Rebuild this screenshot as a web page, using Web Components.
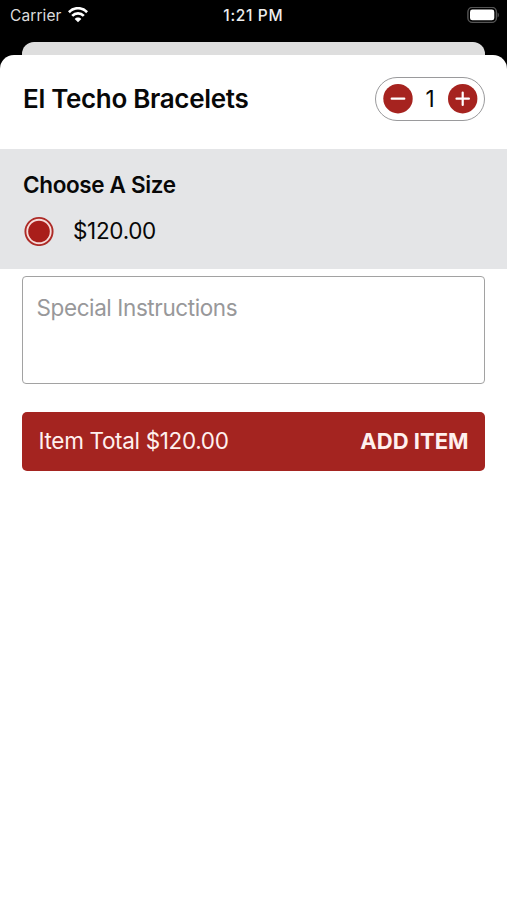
<!DOCTYPE html>
<html lang="en"><head><meta charset="utf-8"><title>El Techo Bracelets</title>
<style>html,body{margin:0;background:#000}body{font-family:Inter,"Liberation Sans",sans-serif;color:#080808}</style></head>
<body><item-screen></item-screen>
<script>
const define = (name, html) => customElements.define(name, class extends HTMLElement {
  constructor() { super(); this.attachShadow({mode: "open"}).innerHTML = html; }
});
define("status-bar", `<style>
:host{display:grid;grid-template-columns:1fr auto 1fr;align-items:center;height:30px;padding:0 8px 0 10px;box-sizing:border-box;color:#dcdcdc;font-size:15.5px;line-height:20px}
.l{display:flex;align-items:center;gap:6px}.l span{letter-spacing:.1px;padding-top:1px}.t{font-weight:500;letter-spacing:.65px;margin:0 .5px 0 -2px;padding-top:1px;color:#eee}.r{justify-self:end;display:flex}svg{display:block}
</style><div class="l"><span>Carrier</span><svg width="20" height="16" viewBox="0 0 20 16" fill="none" stroke="#fff" stroke-width="2.7"><path d="M.9 5.2C6-.1 14-.1 19.1 5.2M4.2 8.9c3.2-3.3 8.4-3.3 11.6 0"/><path d="M10 15.2 6.7 11.9c1.8-1.8 4.8-1.8 6.6 0z" fill="#fff" stroke="none"/></svg></div>
<span class="t">1:21 PM</span>
<div class="r"><svg width="32" height="17" viewBox="0 0 32 17"><rect x=".9" y=".4" width="28.5" height="15" rx="4.5" fill="none" stroke="#555" stroke-width="1.4"/><rect x="3" y="2.5" width="24.3" height="10.8" rx="2.4" fill="#fff"/><path d="M30.6 5.5v5q1.3-.8 1.3-2.5t-1.3-2.5" fill="#555"/></svg></div>`);
define("quantity-stepper", `<style>
:host{display:flex;box-sizing:border-box;width:110px;height:44px;border:1.5px solid #9a9a9c;border-radius:22px;padding:0 6.5px;align-items:center;justify-content:space-between;font-size:22.5px;line-height:28px}
svg{display:block}
</style><svg width="30" height="30"><circle cx="15" cy="14.7" r="14.7" fill="#a6231f"/><path d="M8.7 14.7h12.6" stroke="#fff" stroke-width="2.2" stroke-linecap="round"/></svg>
<slot></slot><svg width="30" height="30"><circle cx="14.7" cy="14.7" r="14.7" fill="#a6231f"/><path d="M8.5 14.7h12.4M14.7 8.5v12.4" stroke="#fff" stroke-width="2.2" stroke-linecap="round"/></svg>`);
define("item-header", `<style>
:host{display:flex;height:94px;box-sizing:border-box;padding:22px 22px 0 23px;justify-content:space-between}
h1{margin:0;font-size:26px;line-height:44px;font-weight:600;letter-spacing:-.32px}
</style><h1><slot></slot></h1><quantity-stepper>1</quantity-stepper>`);
define("size-options", `<style>
:host{display:block;height:120px;box-sizing:border-box;background:#e4e5e7;padding:21px 23px 0}
h2{margin:0;font-size:22.5px;line-height:30px;font-weight:600;letter-spacing:-.36px}
.o{display:flex;align-items:center;gap:19px;height:32px;margin-top:15px;font-size:22.5px;line-height:30px;letter-spacing:-.32px}
.o span{padding-bottom:1px}
svg{display:block;margin-left:1px}
</style><h2>Choose A Size</h2><div class="o"><svg width="30" height="30"><circle cx="15" cy="15.5" r="13.6" fill="#f6dcda" stroke="#ad2b27" stroke-width="1.9"/><circle cx="15" cy="15.5" r="10.8" fill="#a91e1a"/></svg><span><slot></slot></span></div>`);
define("instructions-field", `<style>
:host{display:block;box-sizing:border-box;height:108px;margin:7px 22px 0;border:1.5px solid #a2a2a2;border-radius:4px;padding:15px 13.5px;color:#98989a;font-size:22.5px;line-height:32px;letter-spacing:-.4px}
</style><span><slot></slot></span>`);
define("add-button", `<style>
:host{display:flex;box-sizing:border-box;height:59px;margin:28px 22px 0;border-radius:5px;background:#a42420;color:#fff0ee;padding:0 16.5px;align-items:center;justify-content:space-between;font-size:22.5px;line-height:30px;letter-spacing:-.33px}
span,b{padding-bottom:1px}
b{font-size:22px;font-weight:700;letter-spacing:0}
</style><span><slot></slot></span><b>ADD ITEM</b>`);
define("item-screen", `<style>
:host{display:flex;flex-direction:column;height:900px;overflow:hidden;background:#000}
.back{flex:none;height:13.5px;margin:11.5px 22px 0;border-radius:12px 12px 0 0;background:#dedede}
main{flex:1;background:#fff;border-radius:14px 14px 0 0}
</style><status-bar></status-bar><div class="back"></div><main><item-header>El Techo Bracelets</item-header><size-options>$120.00</size-options><instructions-field>Special Instructions</instructions-field><add-button>Item Total $120.00</add-button></main>`);
</script></body></html>
